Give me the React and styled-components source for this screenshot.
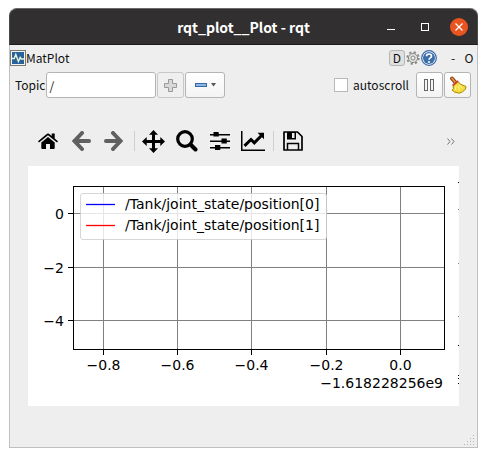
import React from "react";
import styled, { createGlobalStyle } from "styled-components";

const GlobalStyle = createGlobalStyle`
  *, *::before, *::after { box-sizing: border-box; }
  body {
    margin: 0;
    background: #fff;
    color: #111;
    font: 12px/20px "Noto Sans CJK SC", "Noto Sans", sans-serif;
  }
  button, input { font: inherit; color: inherit; }
  svg { display: block; flex: none; }
`;

const Window = styled.main`
  margin: 8px 9px;
  border-radius: 8px 8px 0 0;
`;

const TitleBar = styled.header`
  display: grid;
  grid-template-columns: 1fr auto 1fr;
  align-items: center;
  height: 37px;
  background: #322f30;
  border: 1px solid #4b494a;
  border-top-color: #6b696a;
  border-bottom-color: #1d1c1c;
  border-radius: 8px 8px 0 0;
`;

const Title = styled.h1`
  grid-column: 2;
  margin: 0;
  color: #fff;
  font-size: 14px;
  font-weight: 700;
  white-space: nowrap;
`;

const WindowButtons = styled.div`
  display: flex;
  justify-content: flex-end;
  gap: 16px;
  padding-right: 9px;
`;

const WindowButton = styled.button`
  display: grid;
  place-items: center;
  width: 18px;
  height: 18px;
  padding: 0;
  border: 0;
  border-radius: 50%;
  background: ${(p) => (p.$close ? "#e95420" : "transparent")};
`;

const Body = styled.div`
  background: #eee;
  border: 1px solid #c0c0c0;
  border-top: 0;
`;

const DockBar = styled.div`
  display: flex;
  align-items: center;
  height: 26px;
`;

const DockTitle = styled.span`
  flex: 1;
`;

const DockButton = styled.button`
  display: grid;
  place-items: center;
  height: 16px;
  width: 16px;
  padding: 0;
  border: ${(p) => (p.$raised ? "1px solid #b4b4b4" : "0")};
  border-radius: 3px;
  background: ${(p) => (p.$raised ? "#e0e0e0" : "transparent")};
  line-height: 14px;
`;

const DockControls = styled.div`
  display: flex;
  align-items: center;
  margin-left: 8px;
`;

const TopicBar = styled.div`
  display: flex;
  align-items: center;
  gap: 1px;
  margin-top: 1px;
  padding: 0 6px 0 5px;
`;

const TopicInput = styled.input`
  width: 110px;
  height: 26px;
  padding: 0 2px;
  background: #fff;
  border: 1px solid #b4b4b4;
  border-radius: 3px;
  outline: 0;
`;

const PushButton = styled.button`
  display: flex;
  align-items: center;
  justify-content: center;
  gap: 4px;
  width: ${(p) => p.$width || 27}px;
  height: 26px;
  padding: 0;
  background: ${(p) => (p.disabled ? "#efefef" : "linear-gradient(#fff, #f3f3f3)")};
  border: 1px solid ${(p) => (p.disabled ? "#c8c8c8" : "#b4b4b4")};
  border-radius: 3px;
`;

const Scroll = styled.label`
  display: flex;
  align-items: center;
  gap: 5px;
  margin-left: auto;
  margin-right: 6px;
`;

const Tick = styled.input`
  appearance: none;
  width: 14px;
  height: 14px;
  margin: 0;
  background: #fff;
  border: 1px solid #b9b9b9;
`;

const PlotArea = styled.section`
  padding: 22px 18px 41px;
`;

const PlotTools = styled.nav`
  display: flex;
  align-items: center;
  height: 42px;
  margin-bottom: 4px;
  padding: 0 2px 0 3px;
`;

const ToolButton = styled.button`
  display: grid;
  place-items: center;
  width: 33px;
  height: 33px;
  padding: 0;
  border: 0;
  background: none;
  color: ${(p) => (p.disabled ? "#606060" : "#000")};
`;

const ToolDivider = styled.span`
  width: 1px;
  height: 20px;
  margin: 0 2px 0 4px;
  background: #d0d0d0;
`;

const MoreButton = styled(ToolButton)`
  width: 12px;
  margin-left: auto;
`;

const Canvas = styled.div`
  background: #fff;
`;

const Footer = styled.footer`
  display: flex;
  justify-content: flex-end;
  height: 0;
`;

const Chart = styled.svg`
  width: 100%;
  height: auto;
  font: 14px "DejaVu Sans", sans-serif;
  fill: #000;
`;

const Grip = styled.svg`
  margin: -12px 2px 0 0;
`;

const PlotIcon = () => (
  <svg width="16" height="16" viewBox="0 0 16 16">
    <rect x=".5" y=".5" width="15" height="15" fill="#f4f4ee" stroke="#777973" />
    <rect x="2" y="2" width="12" height="12" fill="#28629b" />
    <path d="M2 8.5h2.200l1.600-4 2.600 7 1.800-4 1 1.500H14" fill="none" stroke="#e8f2d8" strokeWidth="1.400" />
  </svg>
);

const GearIcon = () => (
  <svg width="14" height="14" viewBox="0 0 14 14" fill="none" stroke="#888a85">
    <circle cx="7" cy="7" r="5.800" strokeWidth="1.800" strokeDasharray="2.200 2.355" />
    <circle cx="7" cy="7" r="4.600" fill="#dededc" strokeWidth="1" />
    <circle cx="7" cy="7" r="2" fill="#eee" />
  </svg>
);

const HelpIcon = () => (
  <svg width="16" height="16" viewBox="0 0 16 16">
    <circle cx="8" cy="8" r="7.300" fill="#fff" stroke="#3667a3" strokeWidth="1.200" />
    <circle cx="8" cy="8" r="6" fill="#3c6eac" />
    <path d="M5.500 6.200c0-3 5-2.900 5 0C10.500 8 8 7.800 8 9.800" fill="none" stroke="#fff" strokeWidth="1.700" />
    <circle cx="8" cy="12" r="1.100" fill="#fff" />
  </svg>
);

const BroomIcon = () => (
  <svg width="18" height="18" viewBox="0 0 18 18">
    <path d="M3 2.500l3.500 4" stroke="#8f3b12" strokeWidth="3.800" strokeLinecap="round" />
    <path d="M3 2.500l3.500 4" stroke="#e09a50" strokeWidth="1.800" strokeLinecap="round" />
    <path d="M8.800 5.200l2.700 3 5.500 2.300-.5 2.500-3 3-3.500 1.200-4.500-1.200-2.500-2 1.500-1.200-.5-3.800z" fill="#f6dc3a" stroke="#a88a08" strokeLinejoin="round" />
    <path d="M3.800 9.500l5.200-4.500" stroke="#d0402b" strokeWidth="1.800" />
    <path d="M7 9.500l-.5 4.500M9 9.500l1.500 5M10.500 9l3 3.500" stroke="#fff6a0" />
  </svg>
);

const HomeIcon = () => (
  <svg width="20" height="18" viewBox="0 0 20 18" fill="currentColor">
    <path d="M3.300 10.500L10 5l6.700 5.500V16q0 1-1 1H12v-5H8v5H4.300q-1 0-1-1z" />
    <path d="M0 9.300L9 1.800q1-.8 2 0l2.700 2.300V1.500h3v5.100L20 9.300l-1 1.200L10 3.200 1 10.500z" />
  </svg>
);

const ArrowIcon = ({ right }) => (
  <svg width="20" height="20" viewBox="0 0 20 20" fill="none" stroke="currentColor" strokeWidth="4">
    <path
      d={right ? "M2 10H16M9 2l7.500 8L9 18" : "M18 10H4M11 2l-7.500 8 7.500 8"}
      strokeLinecap="round"
    />
  </svg>
);

const MoveIcon = () => (
  <svg width="23" height="23" viewBox="0 0 23 23" fill="currentColor">
    <path d="M11.500 0l4.500 4.700h-3v5.300h5.300V7L23 11.500 18.300 16v-3H13v5.300h3L11.500 23 7 18.300h3V13H4.700v3L0 11.500 4.700 7v3H10V4.700H7z" />
  </svg>
);

const SearchIcon = () => (
  <svg width="22" height="22" viewBox="0 0 22 22" fill="none" stroke="currentColor">
    <circle cx="9" cy="9" r="7.300" strokeWidth="3.200" />
    <path d="M14.500 14.500l5 5" strokeWidth="4" strokeLinecap="round" />
  </svg>
);

const SlidersIcon = () => (
  <svg width="20" height="18" viewBox="0 0 20 18" fill="currentColor">
    <path d="M0 2h20v1.500H0zM0 8.500h20V10H0zM0 15h20v1.500H0z" />
    <path d="M3.500 0H8q.8 0 .8.800v3.800H3.500zM11.500 6.500h5.300v5H11.500zM5 13h5.300v5H5z" />
  </svg>
);

const TrendIcon = () => (
  <svg width="24" height="20" viewBox="0 0 24 20">
    <path d="M.75 0v19.250H24" fill="none" stroke="currentColor" strokeWidth="1.500" />
    <path d="M3.500 14.800l6.500-6.300 3.300 3.300L20.300 4.800" fill="none" stroke="currentColor" strokeWidth="3" />
    <path d="M16.500 1.800H23v6.500z" fill="currentColor" />
  </svg>
);

const SaveIcon = () => (
  <svg width="20" height="20" viewBox="0 0 20 20">
    <path d="M1 1h13.500L19 5.500V19H1z" fill="none" stroke="currentColor" strokeWidth="1.700" strokeLinejoin="round" />
    <path d="M4 1h9v7.500H4z" fill="currentColor" />
    <path d="M9 2h2.500v5H9z" fill="#eee" />
    <path d="M4.500 19v-6.500h11V19" fill="none" stroke="currentColor" strokeWidth="1.500" />
  </svg>
);

const TOOLS = [
  { label: "Home", icon: <HomeIcon /> },
  { label: "Back", icon: <ArrowIcon />, disabled: true },
  { label: "Forward", icon: <ArrowIcon right />, disabled: true },
  null,
  { label: "Pan", icon: <MoveIcon /> },
  { label: "Zoom", icon: <SearchIcon /> },
  { label: "Configure subplots", icon: <SlidersIcon /> },
  { label: "Edit curves", icon: <TrendIcon /> },
  null,
  { label: "Save", icon: <SaveIcon /> },
];

const X_TICKS = [
  [75.5, "−0.8"],
  [149.5, "−0.6"],
  [223.5, "−0.4"],
  [298.5, "−0.2"],
  [372.5, "0.0"],
];
const Y_TICKS = [
  [47.5, "0"],
  [101.5, "−2"],
  [154.5, "−4"],
];
const SERIES = [
  ["/Tank/joint_state/position[0]", "#0000ff", 38.5],
  ["/Tank/joint_state/position[1]", "#ff0000", 59.5],
];

function PlotChart() {
  return (
    <Chart viewBox="0 0 431 240" role="img" aria-label="Joint position plot">
      {X_TICKS.map(([x, label]) => (
        <g key={label}>
          <path d={`M${x} 21V183`} stroke="#808080" />
          <path d={`M${x} 184v5`} stroke="#000" />
          <text x={x} y="204" textAnchor="middle">{label}</text>
        </g>
      ))}
      {Y_TICKS.map(([y, label]) => (
        <g key={label}>
          <path d={`M46 ${y}H416`} stroke="#808080" />
          <path d={`M40 ${y}h5`} stroke="#000" />
          <text x="36" y={y + 5.5} textAnchor="end">{label}</text>
        </g>
      ))}
      <rect x="45.5" y="20.5" width="371" height="163" fill="none" stroke="#000" />
      <text x="415" y="222" textAnchor="end">−1.618228256e9</text>
      <rect x="52.5" y="27.5" width="246" height="46" rx="2.500" fill="#fff" fillOpacity=".8" stroke="#ccc" strokeOpacity=".8" />
      {SERIES.map(([name, color, y]) => (
        <g key={name}>
          <path d={`M58 ${y}h29`} stroke={color} strokeWidth="1.300" />
          <text x="97" y={y + 4.5}>{name}</text>
        </g>
      ))}
      <path d="M430 16.500h1M430 179.500h1M430 209.500h1M430 212.500h1M430 217.500h1" stroke="#000" />
      <path d="M430 43.500h1M430 97.500h1M430 150.500h1" stroke="#808080" />
    </Chart>
  );
}

export default function App() {
  return (
    <Window>
      <GlobalStyle />
      <TitleBar>
        <Title>rqt_plot__Plot - rqt</Title>
        <WindowButtons>
          <WindowButton aria-label="Minimize">
            <svg width="8" height="8"><path d="M0 6.500h8" stroke="#fff" /></svg>
          </WindowButton>
          <WindowButton aria-label="Maximize">
            <svg width="8" height="8"><rect x=".5" y=".5" width="7" height="7" fill="none" stroke="#fff" /></svg>
          </WindowButton>
          <WindowButton $close aria-label="Close">
            <svg width="8" height="8"><path d="M.5.500l7 7M7.500.500l-7 7" stroke="#fff" strokeWidth="1.300" /></svg>
          </WindowButton>
        </WindowButtons>
      </TitleBar>
      <Body>
        <DockBar>
          <PlotIcon />
          <DockTitle>MatPlot</DockTitle>
          <DockControls>
            <DockButton $raised>D</DockButton>
            <DockButton aria-label="Settings"><GearIcon /></DockButton>
            <DockButton aria-label="Help"><HelpIcon /></DockButton>
          </DockControls>
          <DockControls>
            <DockButton>-</DockButton>
            <DockButton>O</DockButton>
          </DockControls>
        </DockBar>
        <TopicBar>
          <label htmlFor="topic">Topic</label>
          <TopicInput id="topic" defaultValue="/" />
          <PushButton disabled aria-label="Add topic">
            <svg width="13" height="13" viewBox="0 0 13 13">
              <path d="M4.500.500h4v4h4v4h-4v4h-4v-4h-4v-4h4z" fill="#d8d8d8" stroke="#999" />
            </svg>
          </PushButton>
          <PushButton $width={40} aria-label="Remove topic">
            <svg width="12" height="4"><rect x=".5" y=".5" width="11" height="3" fill="#8db5e2" stroke="#3769a8" /></svg>
            <svg width="5" height="4"><path d="M0 0h5L2.500 3.500z" fill="#555" /></svg>
          </PushButton>
          <Scroll>
            <Tick type="checkbox" />
            autoscroll
          </Scroll>
          <PushButton aria-label="Pause">
            <svg width="11" height="12" fill="#f4f4f4" stroke="#666">
              <rect x=".5" y=".5" width="3" height="11" />
              <rect x="6.500" y=".5" width="3" height="11" />
            </svg>
          </PushButton>
          <PushButton aria-label="Clear plot"><BroomIcon /></PushButton>
        </TopicBar>
        <PlotArea>
          <PlotTools aria-label="Plot tools">
            {TOOLS.map((tool, i) =>
              tool ? (
                <ToolButton key={tool.label} aria-label={tool.label} disabled={tool.disabled}>{tool.icon}</ToolButton>
              ) : (
                <ToolDivider key={i} />
              )
            )}
            <MoreButton aria-label="More tools">
              <svg width="8" height="7" fill="none" stroke="#777"><path d="M.5.500l2.500 3-2.500 3M4.500.500l2.500 3-2.500 3" /></svg>
            </MoreButton>
          </PlotTools>
          <Canvas>
            <PlotChart />
          </Canvas>
        </PlotArea>
        <Footer>
          <Grip width="11" height="11" fill="#b5b5b5">
            <path d="M9 0h1v1H9zM6 3h1v1H6zM9 3h1v1H9zM3 6h1v1H3zM6 6h1v1H6zM9 6h1v1H9zM0 9h1v1H0zM3 9h1v1H3zM6 9h1v1H6zM9 9h1v1H9z" />
          </Grip>
        </Footer>
      </Body>
    </Window>
  );
}
